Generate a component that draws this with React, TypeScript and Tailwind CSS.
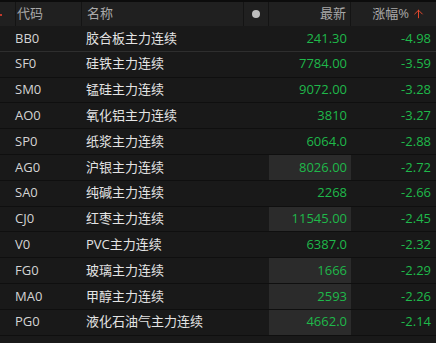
import { ArrowUp } from 'lucide-react'

interface Row {
  code: string
  name: string
  price: string
  change: string
  hl?: boolean
}

const rows: Row[] = [
  { code: 'BB0', name: '胶合板主力连续', price: '241.30', change: '-4.98' },
  { code: 'SF0', name: '硅铁主力连续', price: '7784.00', change: '-3.59' },
  { code: 'SM0', name: '锰硅主力连续', price: '9072.00', change: '-3.28' },
  { code: 'AO0', name: '氧化铝主力连续', price: '3810', change: '-3.27' },
  { code: 'SP0', name: '纸浆主力连续', price: '6064.0', change: '-2.88' },
  { code: 'AG0', name: '沪银主力连续', price: '8026.00', change: '-2.72', hl: true },
  { code: 'SA0', name: '纯碱主力连续', price: '2268', change: '-2.66' },
  { code: 'CJ0', name: '红枣主力连续', price: '11545.00', change: '-2.45', hl: true },
  { code: 'V0', name: 'PVC主力连续', price: '6387.0', change: '-2.32' },
  { code: 'FG0', name: '玻璃主力连续', price: '1666', change: '-2.29', hl: true },
  { code: 'MA0', name: '甲醇主力连续', price: '2593', change: '-2.26', hl: true },
  { code: 'PG0', name: '液化石油气主力连续', price: '4662.0', change: '-2.14', hl: true },
]

export default function App() {
  return (
    <div
      className="w-[436px] h-[343px] overflow-hidden bg-[#191919] text-[13px]"
      style={{ fontFamily: '"Open Sans", "Noto Sans CJK SC", sans-serif' }}
    >
      {/* 表头 */}
      <div className="border-t-2 border-[#0c0c0c] bg-[#202020] h-[26px] flex text-[#a9a9a9]">
        <div className="w-[16px] border-r border-[#141414] relative">
          <div className="absolute left-0 top-[12px] w-[2px] h-[2px] bg-[#c0392b]" />
        </div>
        <div className="w-[66px] border-r border-[#141414] flex items-center pl-[1px]">代码</div>
        <div className="w-[162px] border-r border-[#141414] flex items-center pl-[5px]">名称</div>
        <div className="w-[25px] border-r border-[#141414] flex items-center justify-center">
          <div className="w-[8px] h-[8px] rounded-full bg-[#bdbdbd]" />
        </div>
        <div className="w-[82px] border-r border-[#141414] flex items-center justify-end pr-[4px]">最新</div>
        <div className="flex-1 flex items-center justify-end pr-[11px]">
          涨幅%
          <ArrowUp className="ml-[3px] w-[13px] h-[14px] text-[#ff4d2e]" strokeWidth={1.6} />
        </div>
      </div>

      {/* 列表 */}
      {rows.map((r, i) => (
        <div
          key={r.code}
          className={`flex h-[25.8px] border-b ${i === 0 ? 'border-[#2e2e2e]' : 'border-[#0f0f0f]'}`}
        >
          <div className="w-[82px] pl-[15px] flex items-center text-[#d4d4d4]">{r.code}</div>
          <div className="w-[187px] pl-[4px] flex items-center text-[#e4e4e4]">{r.name}</div>
          <div
            className={`w-[82px] flex items-center justify-end pr-[4px] text-[#1fb84a] ${r.hl ? 'bg-[#2b2b2b]' : ''}`}
          >
            {r.price}
          </div>
          <div className="flex-1 flex items-center justify-end pr-[5px] text-[#1fb84a]">{r.change}</div>
        </div>
      ))}
    </div>
  )
}
